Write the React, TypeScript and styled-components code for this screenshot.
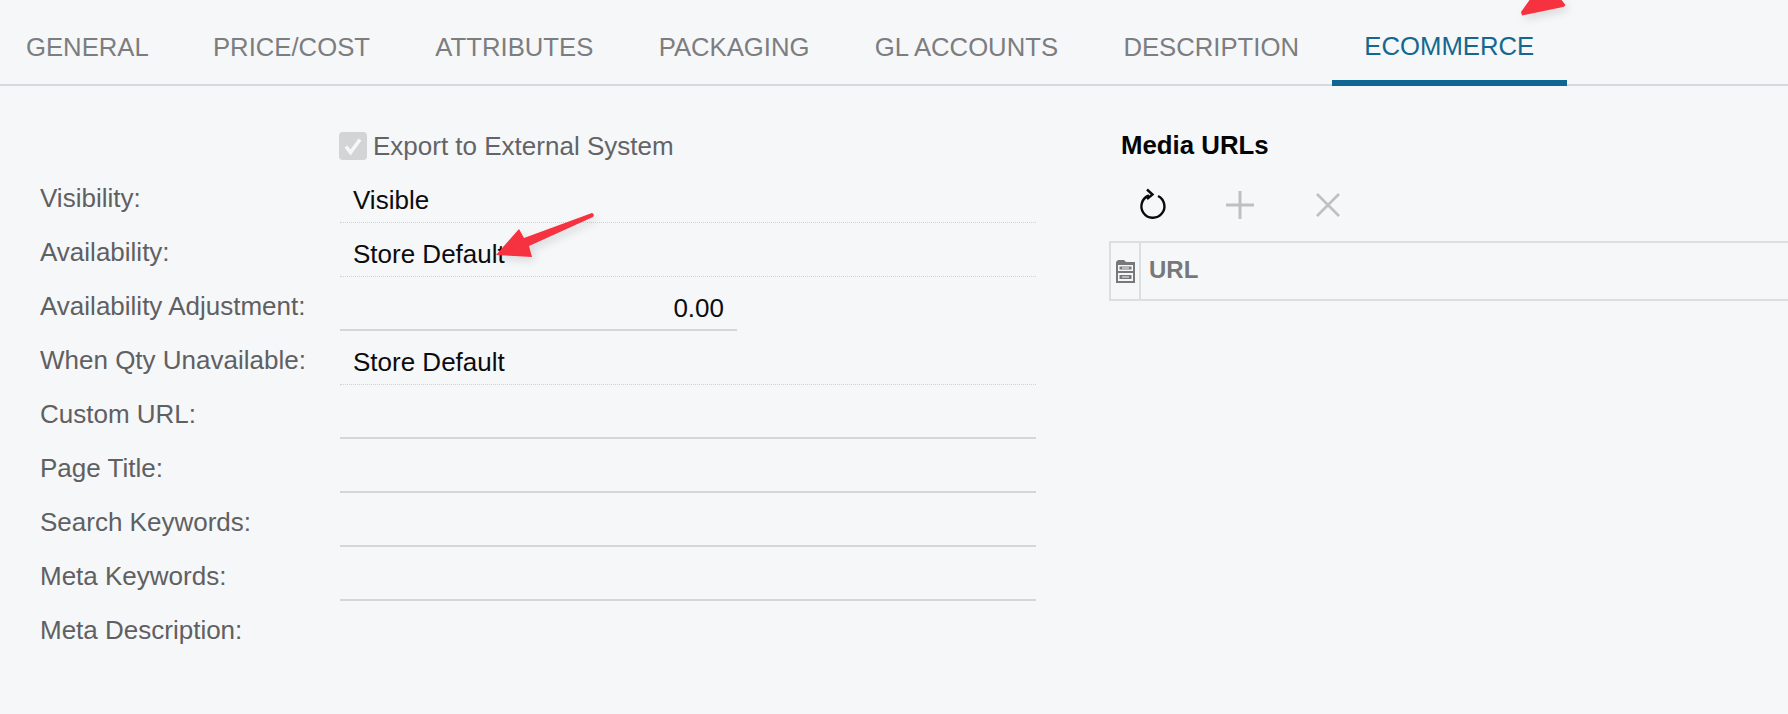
import styled, { createGlobalStyle } from 'styled-components'

const GlobalStyle = createGlobalStyle`
	html, body {
		margin: 0;
		padding: 0;
		background: #f6f7f9;
		overflow: hidden;
	}
`

const Page = styled.div`
	position: relative;
	width: 1788px;
	height: 714px;
	overflow: hidden;
	background: #f6f7f9;
	font-family: 'Liberation Sans', Arial, sans-serif;
`

const TabBar = styled.div`
	display: flex;
	height: 86px;
	box-sizing: border-box;
	border-bottom: 2px solid #d6d8db;
`

const Tab = styled.div<{ active?: boolean }>`
	box-sizing: border-box;
	height: 86px;
	padding: ${(props) => (props.active ? '13px' : '14px')} 32.7px 0;
	display: flex;
	align-items: center;
	font-size: 25.7px;
	white-space: nowrap;
	color: ${(props) => (props.active ? '#14688f' : '#7c7d7f')};
	border-bottom: 6px solid ${(props) => (props.active ? '#0f6690' : 'transparent')};
	&:first-child {
		padding-left: 26px;
		padding-right: 31.5px;
	}
`

const Body = styled.div`
	display: grid;
	grid-template-columns: 1109px 1fr;
`

const Form = styled.div`
	padding-top: 33px;
`

const Row = styled.div`
	display: grid;
	grid-template-columns: 340px 696px;
	height: 54px;
`

const Label = styled.div`
	padding-left: 40px;
	height: 50px;
	line-height: 50px;
	font-size: 26px;
	color: #5f6062;
	white-space: nowrap;
`

const CheckRow = styled.div`
	display: flex;
	align-items: center;
	gap: 6px;
	height: 54px;
	margin-left: -1px;
`

const CheckBox = styled.div`
	width: 28px;
	height: 28px;
	border-radius: 4px;
	background: #d3d4d6;
	display: flex;
	align-items: center;
	justify-content: center;
`

const CheckLabel = styled.span`
	font-size: 26px;
	color: #636466;
`

const Field = styled.div<{ line: 'dotted' | 'solid'; short?: boolean; right?: boolean }>`
	box-sizing: border-box;
	height: 50px;
	width: ${(props) => (props.short ? '397px' : '100%')};
	padding: 0 13px;
	line-height: 54px;
	font-size: 26px;
	color: #0c0c0c;
	text-align: ${(props) => (props.right ? 'right' : 'left')};
	border-bottom: ${(props) =>
		props.line === 'dotted' ? '1px dotted #cfd1d4' : '2px solid #d4d6d8'};
`

const MediaPanel = styled.div`
	padding-top: 42px;
`

const MediaTitle = styled.div`
	padding-left: 12px;
	font-size: 25.8px;
	line-height: 34px;
	font-weight: 700;
	color: #050505;
`

const Toolbar = styled.div`
	display: flex;
	box-sizing: border-box;
	height: 79px;
	padding-top: 7px;
	align-items: center;
`

const ToolButton = styled.div`
	width: 87.5px;
	height: 44px;
	display: flex;
	align-items: center;
	justify-content: center;
`

const Grid = styled.div`
	display: flex;
	height: 60px;
	box-sizing: border-box;
	border: 2px solid #dcdee0;
	border-right: none;
`

const SelectorCell = styled.div`
	width: 28px;
	display: flex;
	align-items: center;
	justify-content: center;
	border-right: 2px solid #dcdee0;
`

const HeaderCell = styled.div`
	padding-left: 8px;
	line-height: 54px;
	font-size: 24px;
	font-weight: 700;
	color: #77787a;
`

const ArrowLayer = styled.svg`
	position: absolute;
	left: 0;
	top: 0;
	pointer-events: none;
`

const rows = [
	{ label: 'Visibility:', value: 'Visible', line: 'dotted' as const },
	{ label: 'Availability:', value: 'Store Default', line: 'dotted' as const },
	{ label: 'Availability Adjustment:', value: '0.00', line: 'solid' as const, short: true, right: true },
	{ label: 'When Qty Unavailable:', value: 'Store Default', line: 'dotted' as const },
	{ label: 'Custom URL:', line: 'solid' as const },
	{ label: 'Page Title:', line: 'solid' as const },
	{ label: 'Search Keywords:', line: 'solid' as const },
	{ label: 'Meta Keywords:', line: 'solid' as const },
]

const tabs = ['GENERAL', 'PRICE/COST', 'ATTRIBUTES', 'PACKAGING', 'GL ACCOUNTS', 'DESCRIPTION']

export default function App() {
	return (
		<Page>
			<GlobalStyle />
			<TabBar>
				{tabs.map((tab) => (
					<Tab key={tab}>{tab}</Tab>
				))}
				<Tab active>ECOMMERCE</Tab>
			</TabBar>
			<Body>
				<Form>
					<Row>
						<div />
						<CheckRow>
							<CheckBox>
								<svg width="22" height="22" viewBox="0 0 22 22">
									<path d="M4 11.500l4.500 6L18 4.500" fill="none" stroke="#f6f7f9" strokeWidth="3.600" />
								</svg>
							</CheckBox>
							<CheckLabel>Export to External System</CheckLabel>
						</CheckRow>
					</Row>
					{rows.map((row) => (
						<Row key={row.label}>
							<Label>{row.label}</Label>
							<Field line={row.line} short={row.short} right={row.right}>
								{row.value}
							</Field>
						</Row>
					))}
					<Row>
						<Label>Meta Description:</Label>
					</Row>
				</Form>
				<MediaPanel>
					<MediaTitle>Media URLs</MediaTitle>
					<Toolbar>
						<ToolButton>
							<svg width="30" height="34" viewBox="0 0 30 34" fill="none" stroke="#0a0a0a" strokeWidth="2.400">
								<path d="M11 7.500A11.500 11.500 0 1 0 20 8" />
								<path d="M9 1.500l5.500 5L9 11" />
							</svg>
						</ToolButton>
						<ToolButton>
							<svg width="28" height="28" viewBox="0 0 28 28" stroke="#bfc0c2" strokeWidth="3">
								<path d="M14 0v28M0 14h28" />
							</svg>
						</ToolButton>
						<ToolButton>
							<svg width="24" height="24" viewBox="0 0 24 24" stroke="#bfc0c2" strokeWidth="2.600">
								<path d="M1 1l22 22M23 1L1 23" />
							</svg>
						</ToolButton>
					</Toolbar>
					<Grid>
						<SelectorCell>
							<svg width="19" height="23" viewBox="0 0 19 23">
								<path d="M0 23V2l2-2h6l2 2h9v21z" fill="#77787a" />
								<path d="M2 5h15v6H2zM2 13h15v8H2z" fill="#f6f7f9" />
								<path d="M3.500 6.500h12v3h-12zM3.500 15h12v4h-12z" fill="#77787a" />
								<path d="M6 7.500h7v1H6zM6 16.500h7v1H6z" fill="#f6f7f9" />
							</svg>
						</SelectorCell>
						<HeaderCell>URL</HeaderCell>
					</Grid>
				</MediaPanel>
			</Body>
			<ArrowLayer width="1788" height="714" viewBox="0 0 1788 714">
				<defs>
					<filter id="arrowShadow" x="-30%" y="-30%" width="160%" height="160%">
						<feDropShadow dx="3" dy="4" stdDeviation="4" floodColor="#000000" floodOpacity="0.12" />
					</filter>
				</defs>
				<g filter="url(#arrowShadow)" fill="#f7303f">
					<path d="M496 255L519 229L524 238L592 213Q595 214 593 217L529 246L532 257Z" />
					<path d="M1522 15.500L1521 12L1531 -2L1560 -2L1565.500 5Q1565 6.500 1563 7Z" />
				</g>
			</ArrowLayer>
		</Page>
	)
}
